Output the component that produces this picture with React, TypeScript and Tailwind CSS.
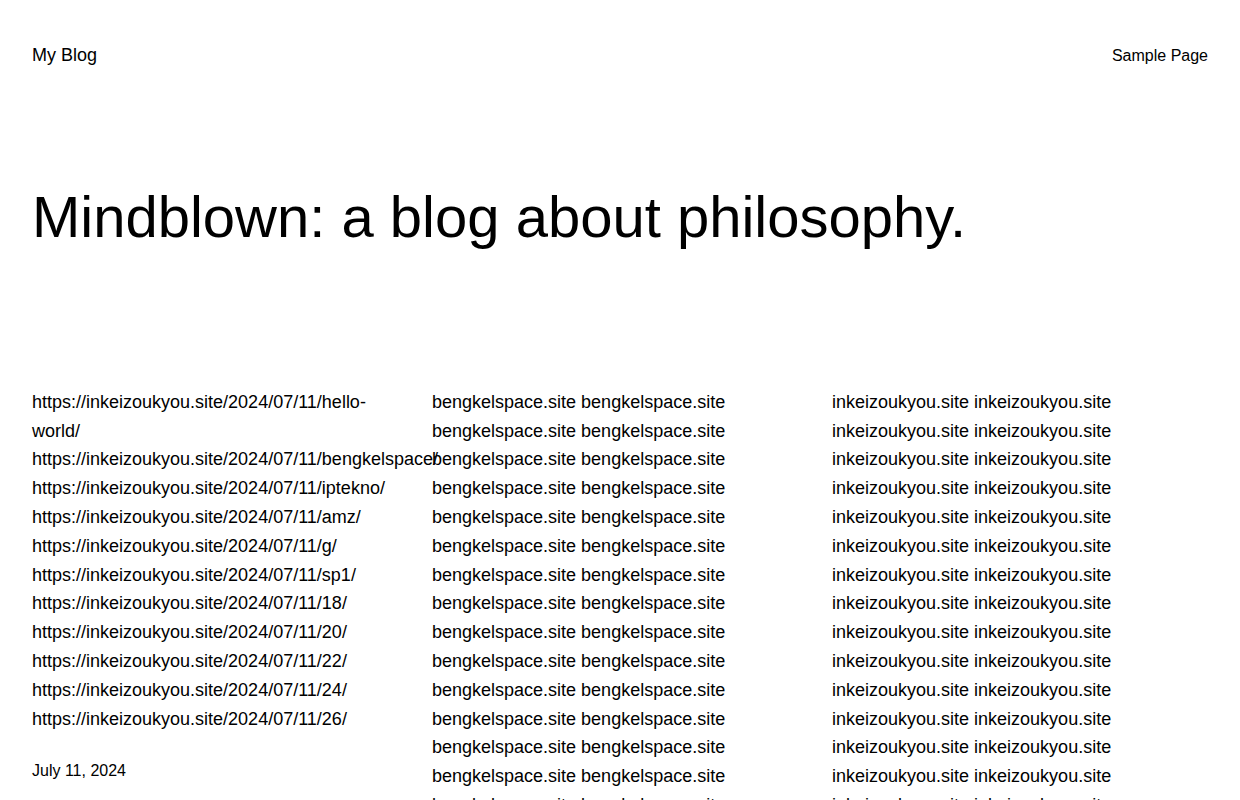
const urls = [
  'hello-world/',
  'bengkelspace/',
  'iptekno/',
  'amz/',
  'g/',
  'sp1/',
  '18/',
  '20/',
  '22/',
  '24/',
  '26/',
];

const repeat = (word: string, n: number) => Array.from({ length: n }, () => word).join(' ');

export default function App() {
  return (
    <div className="min-h-screen bg-white text-black font-['Liberation_Sans',Arial,sans-serif]">
      <div className="px-8">
        {/* Header */}
        <header className="flex h-[28.8px] items-start justify-between mt-[41px]">
          <a className="text-[18px] leading-[28.8px]">My Blog</a>
          <nav className="pt-[1px] text-[16px] leading-[28.8px]">
            <a>Sample Page</a>
          </nav>
        </header>

        {/* Hero title */}
        <h1 className="mt-[111px] text-[58px] leading-[72px] font-normal">
          Mindblown: a blog about philosophy.
        </h1>

        {/* Content columns */}
        <div className="mt-[135px] grid grid-cols-3 gap-6 text-[18px] leading-[28.8px]">
          <div>
            <p>
              {urls.map((u) => `https://inkeizoukyou.site/2024/07/11/${u}`).join(' ')}
            </p>
            <p className="mt-[25px] text-[16px] leading-[25.6px]">July 11, 2024</p>
          </div>
          <div>
            <p>{repeat('bengkelspace.site', 40)}</p>
          </div>
          <div>
            <p>{repeat('inkeizoukyou.site', 40)}</p>
          </div>
        </div>
      </div>
    </div>
  );
}
